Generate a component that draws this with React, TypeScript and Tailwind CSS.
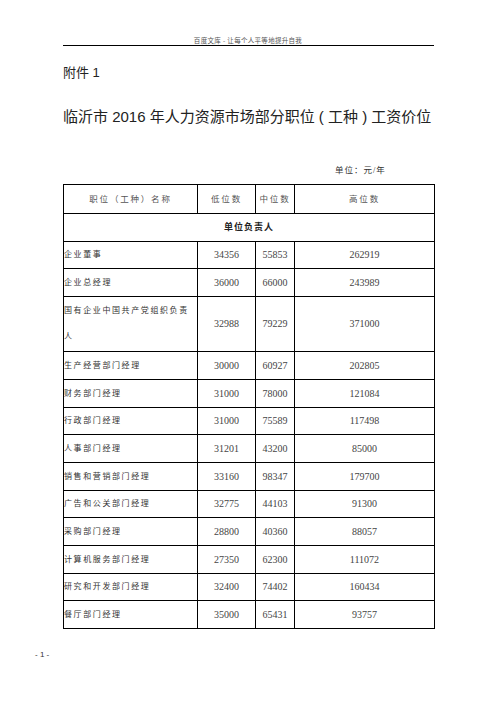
import React from "react";

const cjk = "font-['Liberation_Serif','Noto_Sans_CJK_SC',serif]";
const sans = "font-['Liberation_Sans','Noto_Sans_CJK_SC',sans-serif]";

// name, low, median, high, row height class
const rows: [string, number, number, number, string][] = [
  ["企业董事", 34356, 55853, 262919, "h-[27px]"],
  ["企业总经理", 36000, 66000, 243989, "h-[28px]"],
  ["国有企业中国共产党组织负责人", 32988, 79229, 371000, "h-[55px]"],
  ["生产经营部门经理", 30000, 60927, 202805, "h-[28px]"],
  ["财务部门经理", 31000, 78000, 121084, "h-[28px]"],
  ["行政部门经理", 31000, 75589, 117498, "h-[27px]"],
  ["人事部门经理", 31201, 43200, 85000, "h-[28px]"],
  ["销售和营销部门经理", 33160, 98347, 179700, "h-[28px]"],
  ["广告和公关部门经理", 32775, 44103, 91300, "h-[27px]"],
  ["采购部门经理", 28800, 40360, 88057, "h-[28px]"],
  ["计算机服务部门经理", 27350, 62300, 111072, "h-[28px]"],
  ["研究和开发部门经理", 32400, 74402, 160434, "h-[27px]"],
  ["餐厅部门经理", 35000, 65431, 93757, "h-[28px]"],
];

const App = () => {
  return (
    <div className={`w-[496px] h-[702px] bg-white text-[#222] ${cjk}`}>
      {/* page header */}
      <div className="pt-[37px] text-center text-[6.5px] leading-[8px] text-[#555] tracking-[0.3px]">
        百度文库 - 让每个人平等地提升自我
      </div>
      <div className="ml-[63px] w-[371px] h-px bg-black" />

      <div className={`ml-[63px] mt-[19px] text-[13px] leading-[16px] text-[#222] ${sans}`}>附件 1</div>

      <div className={`ml-[63px] mt-[26px] text-[15px] leading-[20px] text-[#222] whitespace-nowrap ${sans}`}>
        临沂市 2016 年人力资源市场部分职位 ( 工种 ) 工资价位
      </div>

      <div className="ml-[335px] mt-[37px] text-[8.5px] leading-[12px] text-[#333] tracking-[1px]">
        单位：元/年
      </div>

      <table className="ml-[63px] mt-[8px] w-[371px] border-collapse table-fixed">
        <colgroup>
          <col className="w-[134px]" />
          <col className="w-[58px]" />
          <col className="w-[39px]" />
          <col className="w-[140px]" />
        </colgroup>
        <thead>
          <tr className="h-[29px] text-[8.5px] text-[#555] tracking-[1.8px]">
            <th className="border border-black font-normal text-center p-0">职位（工种）名称</th>
            <th className="border border-black font-normal text-center p-0">低位数</th>
            <th className="border border-black font-normal text-center p-0">中位数</th>
            <th className="border border-black font-normal text-center p-0">高位数</th>
          </tr>
        </thead>
        <tbody>
          <tr className="h-[28px]">
            <td colSpan={4} className="border border-black text-center text-[9px] font-bold tracking-[1px] p-0">
              单位负责人
            </td>
          </tr>
          {rows.map(([name, lo, mid, hi, h]) => (
            <tr key={name} className={h}>
              <td className="border border-black p-0 text-left text-[8px] leading-[26px] tracking-[1.6px] text-[#333] align-middle">
                {name}
              </td>
              <td className="border border-black p-0 text-center text-[10px] leading-[12px] text-[#444]">{lo}</td>
              <td className="border border-black p-0 text-center text-[10px] leading-[12px] text-[#444]">{mid}</td>
              <td className="border border-black p-0 text-center text-[10px] leading-[12px] text-[#444]">{hi}</td>
            </tr>
          ))}
        </tbody>
      </table>

      <div className={`ml-[35px] mt-[21px] text-[8px] leading-[10px] text-[#333] ${sans}`}>- 1 -</div>
    </div>
  );
};

export default App;
